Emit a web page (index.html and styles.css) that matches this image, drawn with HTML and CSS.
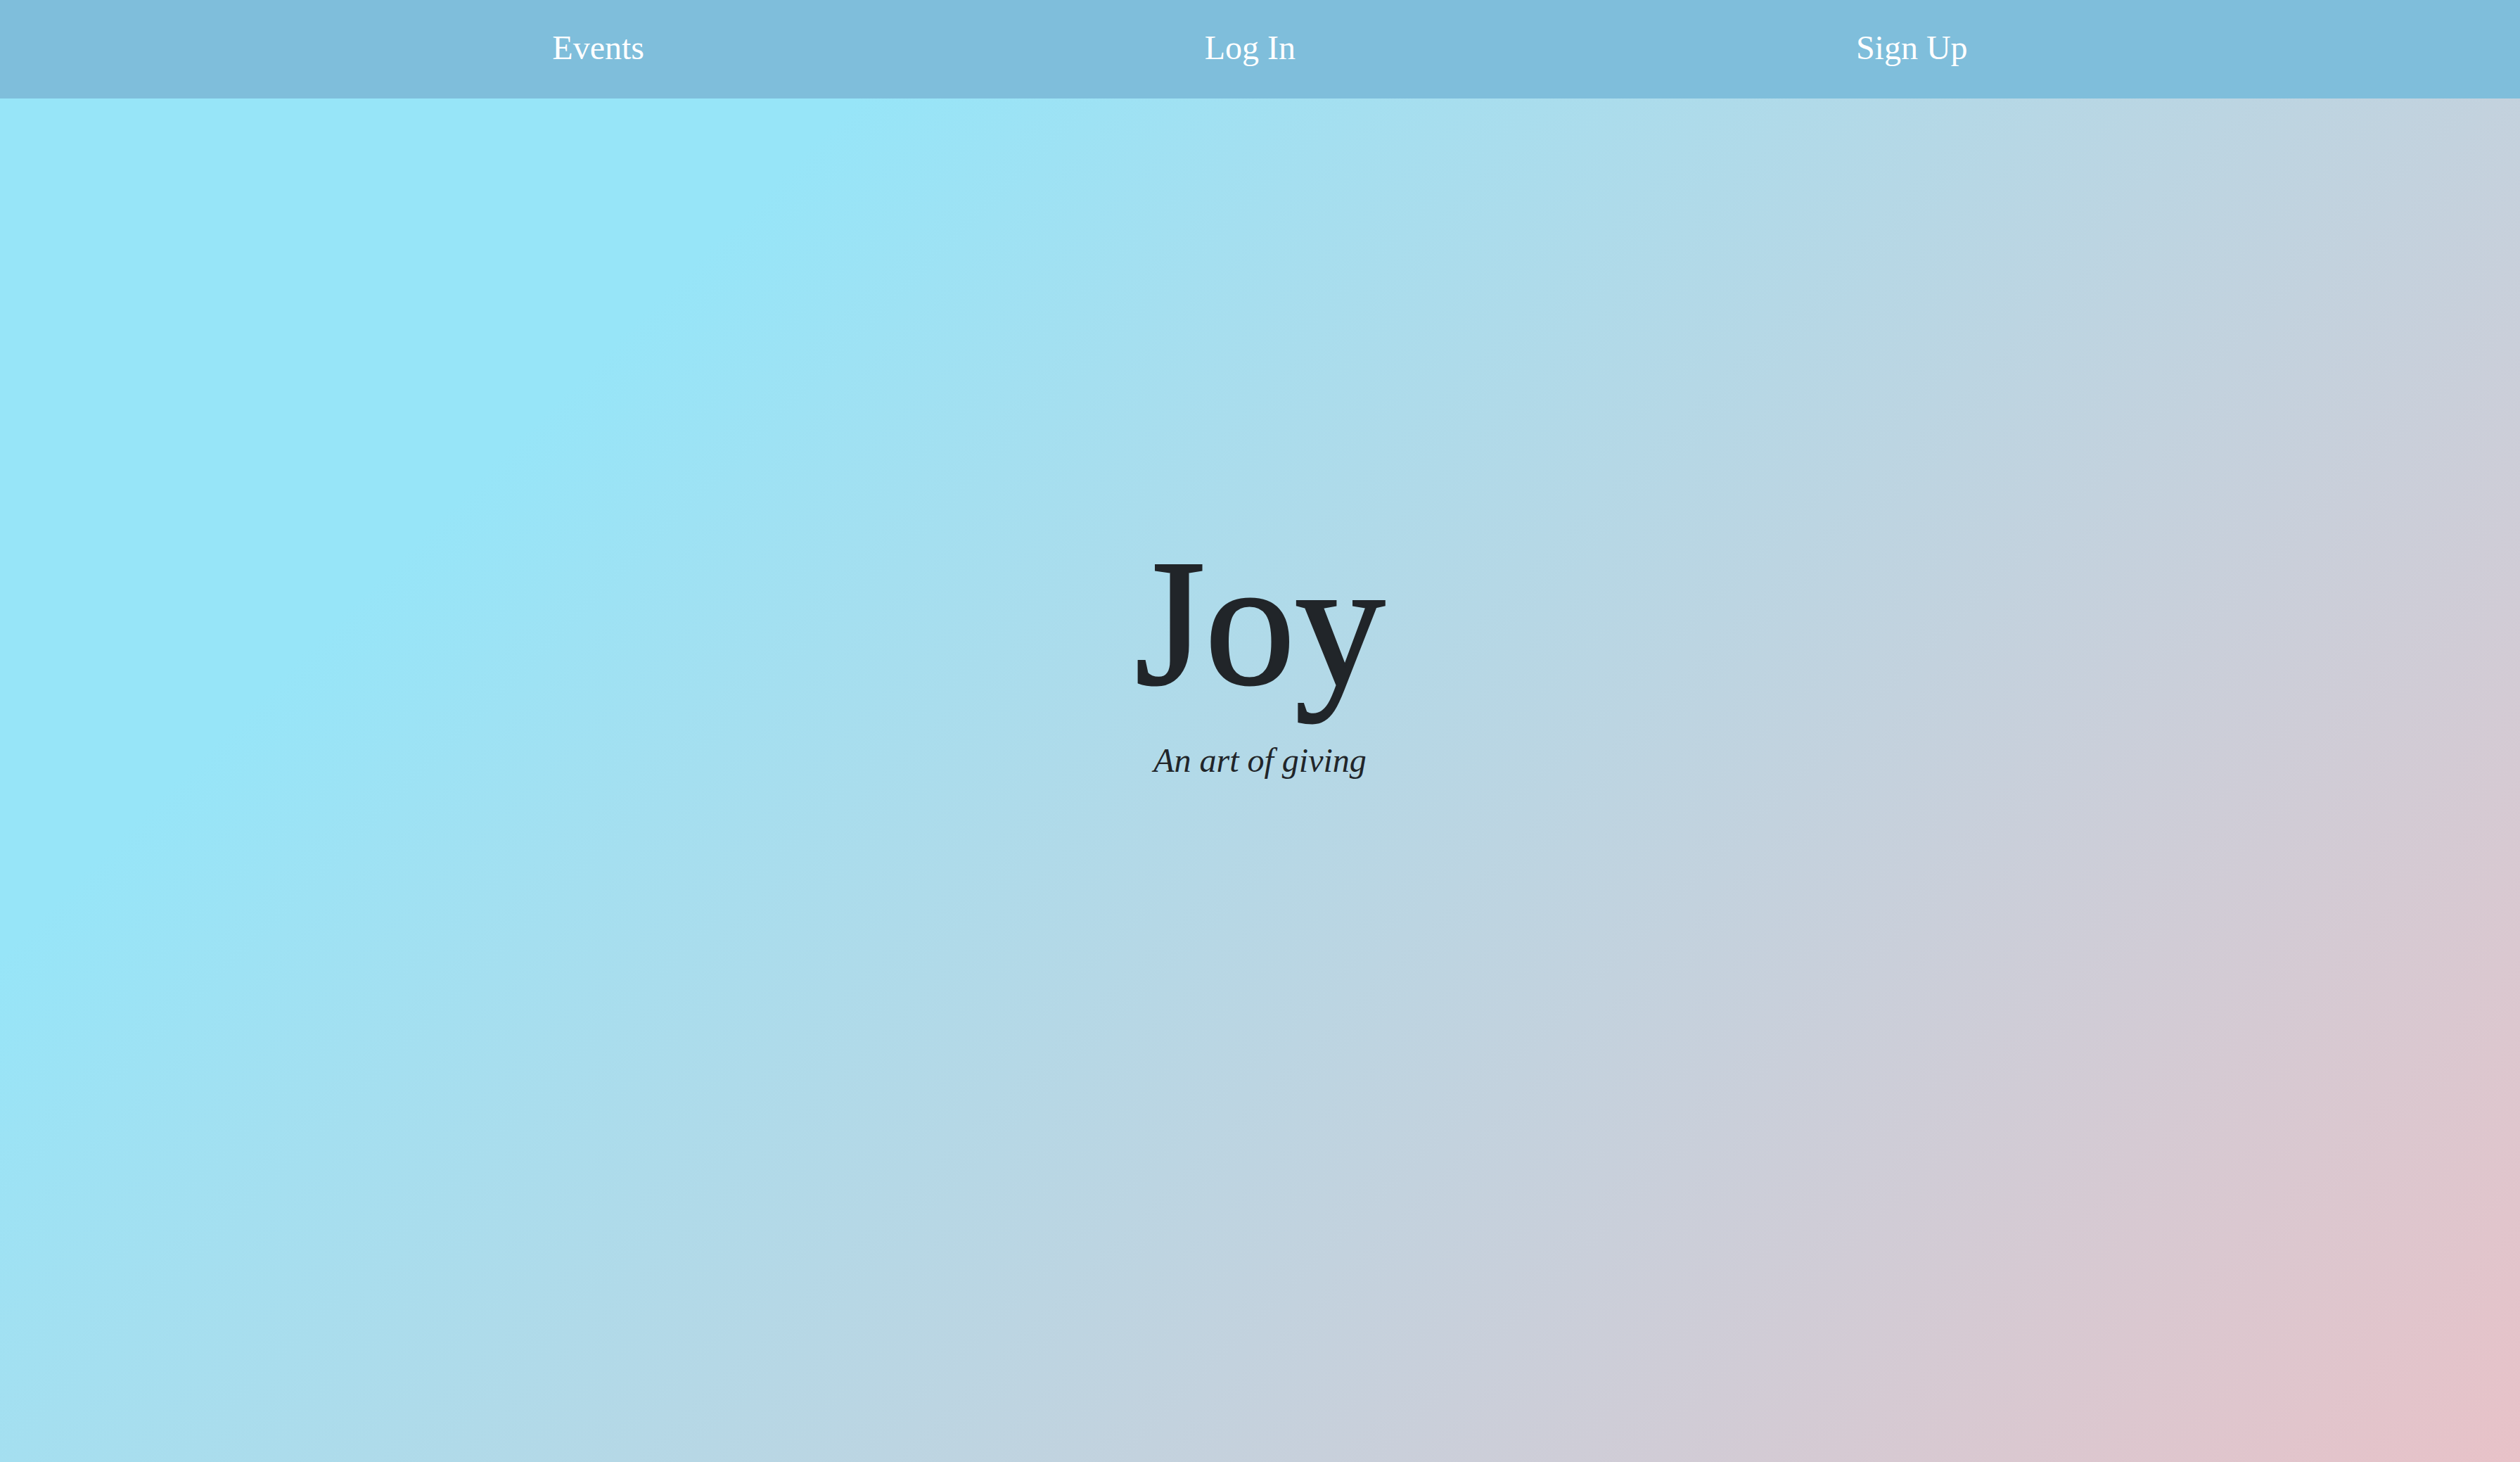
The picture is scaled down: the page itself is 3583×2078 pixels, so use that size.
FILE: index.html
```html
<!DOCTYPE html>
<html lang="en">
<head>
<meta charset="utf-8">
<title>Joy</title>
<link rel="stylesheet" href="styles.css">
</head>
<body>
<nav class="topnav">
  <ul class="nav-links">
    <li><a href="#">Events</a></li>
    <li><a href="#">Log In</a></li>
    <li><a href="#">Sign Up</a></li>
  </ul>
</nav>
<main class="hero">
  <h1 class="title">Joy</h1>
  <p class="tagline">An art of giving</p>
</main>
</body>
</html>
```

FILE: styles.css
```css
html, body {
  margin: 0;
  padding: 0;
}
body {
  min-height: 100vh;
  background: linear-gradient(135deg, #97e5f8 0%, #97e5f8 24%, #e8c2c8 100%);
  font-family: "Liberation Serif", "Times New Roman", serif;
  color: #212529;
}
.topnav {
  background: #7fbedb;
  height: 140px;
  display: flex;
  align-items: center;
}
.nav-links {
  list-style: none;
  margin: 0 auto;
  padding: 0 0 4px;
  width: 78.4%;
  display: flex;
  justify-content: space-around;
  align-items: center;
}
.nav-links a {
  color: #ffffff;
  text-decoration: none;
  font-size: 48px;
  line-height: 1;
}
.hero {
  display: flex;
  flex-direction: column;
  align-items: center;
  padding-top: 618px;
}
.title {
  margin: 0;
  font-size: 256px;
  font-weight: normal;
  line-height: 1;
  -webkit-text-stroke: 3px #212529;
}
.tagline {
  margin: 38px 0 0;
  font-size: 48px;
  font-style: italic;
  line-height: 1.2;
}
```
